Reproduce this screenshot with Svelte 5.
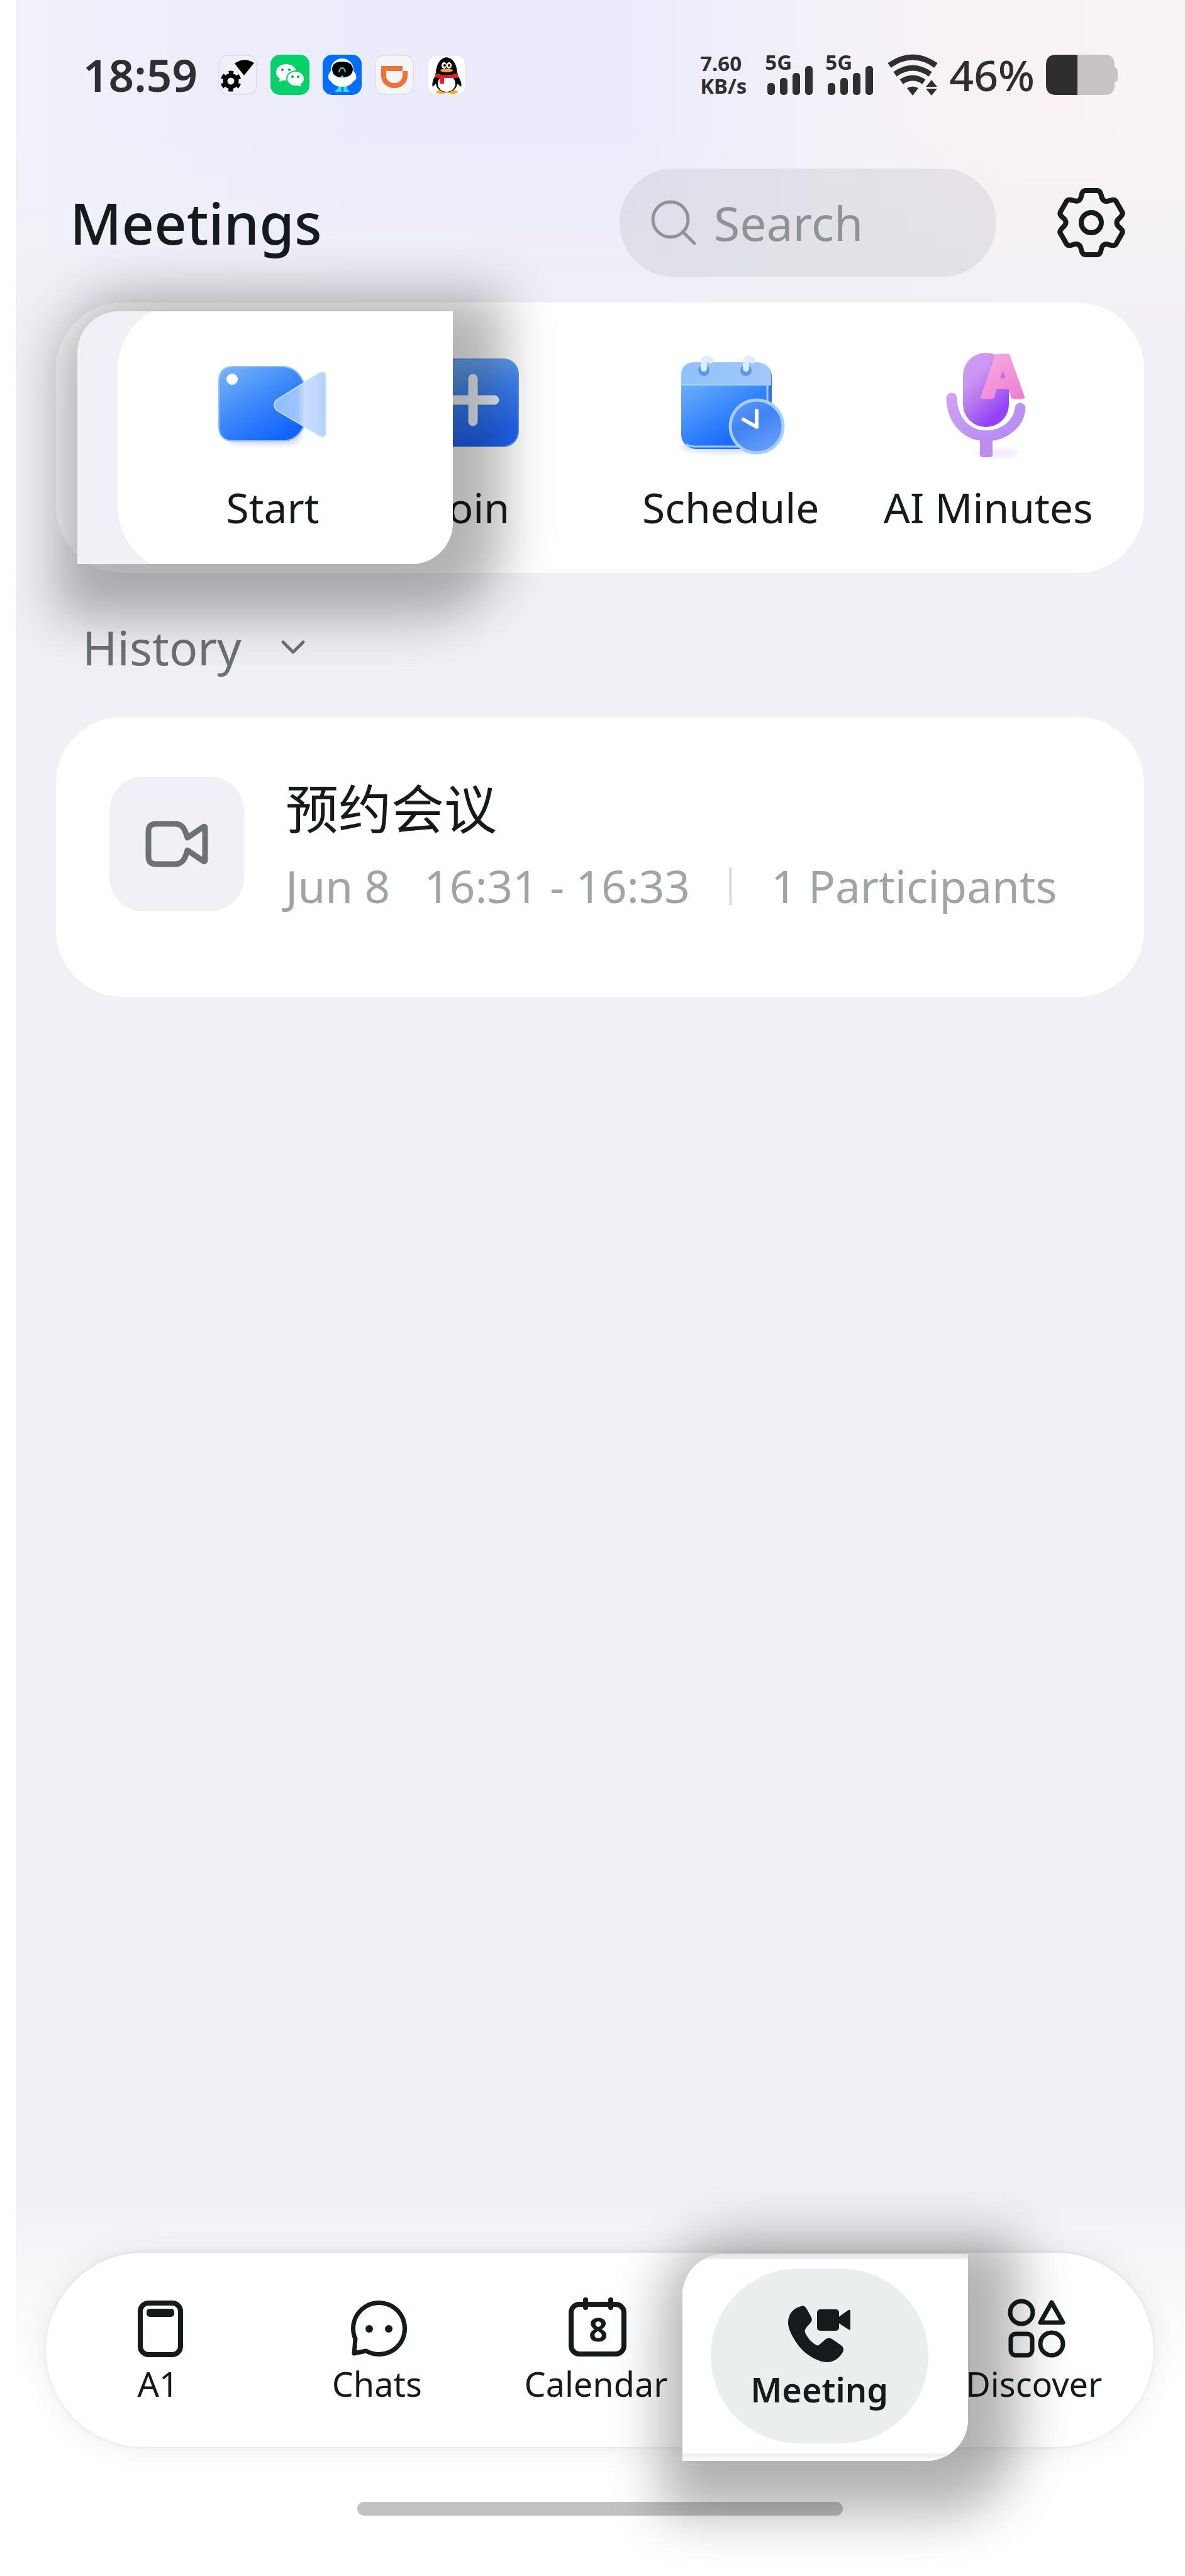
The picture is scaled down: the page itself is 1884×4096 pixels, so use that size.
<script>
    let query = $state("")
    let open = $state(true)

    // Outline of the settings cog: one tooth, turned six times
    function turn(x, y, deg) {
        const a = deg * Math.PI / 180
        const px = x * Math.cos(a) - y * Math.sin(a)
        const py = x * Math.sin(a) + y * Math.cos(a)
        return `${px.toFixed(1)} ${py.toFixed(1)}`
    }
    const cog = [0, 60, 120, 180, 240, 300].map((deg, i) =>
        `${i ? "L" : "M"}${turn(-10, -51, deg)}L${turn(10, -51, deg)}` +
        `Q${turn(14, -51, deg)} ${turn(16, -43, deg)}` +
        `Q${turn(18, -31, deg)} ${turn(29, -35, deg)}` +
        `Q${turn(37, -38, deg)} ${turn(39, -34, deg)}`
    ).join("") + "Z"

    const meetings = [
        { title: "预约会议", date: "Jun 8", time: "16:31 - 16:33", people: "1 Participants" }
    ]
</script>

{#snippet signal()}
    <div class="signal">
        <span>5G</span>
        <svg viewBox="0 0 74 46" aria-hidden="true">
            <rect x="1" y="27" width="12" height="19" rx="5" />
            <rect x="21" y="19" width="12" height="27" rx="5" />
            <rect x="41" y="11" width="12" height="35" rx="5" />
            <rect x="61" y="0" width="12" height="46" rx="5" />
        </svg>
    </div>
{/snippet}

<main class="phone">
    <div class="status">
        <div class="status-left">
            <time class="clock">18:59</time>
            <svg class="app" viewBox="0 0 62 64" aria-hidden="true">
                <rect x="1" y="1" width="60" height="62" rx="14" fill="#f0effb" stroke="#d5d4de" stroke-width="1" />
                <path d="M26 14Q41 3 57 13L41 33Z" />
                <circle cx="20" cy="42" r="9" fill="none" stroke="#000" stroke-width="7" />
                <circle cx="20" cy="42" r="13" fill="none" stroke="#000" stroke-width="7" stroke-dasharray="6.8 6.8" stroke-dashoffset="-3.4" />
            </svg>
            <svg class="app" viewBox="0 0 62 64" aria-hidden="true">
                <rect width="62" height="64" rx="15" fill="#08d169" />
                <g fill="#fff">
                    <ellipse cx="25" cy="28" rx="16" ry="13" />
                    <path d="M15 36L14 43L24 39Z" />
                    <ellipse cx="40" cy="38" rx="14" ry="12" stroke="#08d169" stroke-width="2" />
                    <path d="M42 48L49 51L47 44Z" />
                </g>
                <g fill="#08a552">
                    <circle cx="19" cy="24" r="2" /><circle cx="30" cy="24" r="2" />
                    <circle cx="35" cy="35" r="2" /><circle cx="44" cy="35" r="2" />
                </g>
            </svg>
            <svg class="app" viewBox="0 0 62 64" aria-hidden="true">
                <rect width="62" height="64" rx="15" fill="#006fff" />
                <path d="M24 50H30V59H20Q20 55 24 55ZM33 50H39V55Q42 56 42 59H33Z" fill="#35dde0" />
                <circle cx="31" cy="24" r="18" fill="#fff" />
                <path d="M13 26C7 32 8 40 13 42C19 54 43 54 49 42C55 40 55 32 49 26Z" fill="#fff" />
                <path d="M15 22Q16 11 31 11Q46 11 48 22Q48 36 31 36Q15 36 15 22Z" fill="#000" />
                <path d="M26 28Q27 21 31 21Q35 21 36 28" fill="none" stroke="#35dde0" stroke-width="2" />
                <circle cx="31" cy="35" r="2" fill="#35dde0" />
            </svg>
            <svg class="app" viewBox="0 0 62 64" aria-hidden="true">
                <rect x="1" y="1" width="60" height="62" rx="14" fill="#f6f5f5" stroke="#d5d4de" stroke-width="1" />
                <path d="M44 22H14V33C14 43 22 49 31 49C41 49 48 42 48 33V26" fill="none" stroke="#eb7335" stroke-width="8" />
            </svg>
            <svg class="app" viewBox="0 0 62 64" aria-hidden="true">
                <rect x="1" y="1" width="60" height="62" rx="14" fill="#fff" stroke="#e2e1ea" stroke-width="1" />
                <ellipse cx="23" cy="59" rx="9" ry="3" fill="#f5a623" />
                <ellipse cx="40" cy="59" rx="9" ry="3" fill="#f5a623" />
                <path d="M14 32C14 -5 48 -5 48 32C52 38 56 46 54 51L48 46C46 64 16 64 14 46L9 51C7 46 10 38 14 32Z" />
                <ellipse cx="31" cy="46" rx="14" ry="13" fill="#fff" />
                <ellipse cx="27" cy="17" rx="4" ry="5" fill="#fff" />
                <ellipse cx="35" cy="17" rx="4" ry="5" fill="#fff" />
                <circle cx="28" cy="17" r="2" /><circle cx="35" cy="17" r="2" />
                <ellipse cx="31" cy="25" rx="10" ry="3" fill="#f5a623" />
                <path d="M13 29Q31 36 49 29V37H27V46H20V37L13 36Z" fill="#e21f26" />
            </svg>
        </div>
        <div class="status-right">
            <div class="speed">
                <span class="rate">7.60</span>
                <span class="unit">KB/s</span>
            </div>
            {@render signal()}
            {@render signal()}
            <svg class="wifi" viewBox="0 0 80 65" aria-hidden="true">
                <g fill="none" stroke="#2f2f2f" stroke-width="9">
                    <path d="M3 17Q40 -9 77 17" />
                    <path d="M12 31Q40 11 68 31" />
                    <path d="M22 43Q40 31 58 43" />
                </g>
                <path d="M31 53Q40 48 49 53L40 65ZM61 51L70 40L79 51ZM61 54H79L70 65Z" fill="#2f2f2f" />
            </svg>
            <span class="percent">46%</span>
            <svg class="battery" viewBox="0 0 114 64" aria-hidden="true">
                <path d="M50 0H93Q109 0 109 16V20Q114 21 114 26V38Q114 43 109 44V48Q109 64 93 64H50Z" fill="#c7c3c4" />
                <path d="M16 0H50V64H16Q0 64 0 48V16Q0 0 16 0Z" fill="#2f2d2e" />
            </svg>
        </div>
    </div>

    <header class="top">
        <h1>Meetings</h1>
        <label class="search">
            <svg viewBox="0 0 72 72" aria-hidden="true">
                <circle cx="31" cy="31" r="28" />
                <path d="M52 52L69 69" />
            </svg>
            <input type="text" placeholder="Search" aria-label="Search" bind:value={query} />
        </label>
        <button class="settings" aria-label="Settings">
            <svg viewBox="-56 -56 112 112" aria-hidden="true">
                <path d={cog} />
                <circle r="16" />
            </svg>
        </button>
    </header>

    <section class="card actions">
        <div class="callout start-callout">
            <div class="callout-card">
                <button class="action">
                    <svg viewBox="0 0 170 170" aria-hidden="true">
                        <defs>
                            <linearGradient id="cam" x1="0" y1="0" x2="0.7" y2="1">
                                <stop offset="0" stop-color="#7ab6f8" />
                                <stop offset="0.5" stop-color="#3f8bfa" />
                                <stop offset="1" stop-color="#1263ff" />
                            </linearGradient>
                            <linearGradient id="lens" x1="0" y1="0" x2="1" y2="0">
                                <stop offset="0" stop-color="#8fbcff" />
                                <stop offset="0.45" stop-color="#9cc3fd" />
                                <stop offset="0.6" stop-color="#cbdffd" />
                                <stop offset="1" stop-color="#b4d2fd" />
                            </linearGradient>
                            <filter id="soft" x="-20%" y="-20%" width="140%" height="150%">
                                <feGaussianBlur stdDeviation="5" />
                            </filter>
                        </defs>
                        <rect x="10" y="110" width="120" height="38" rx="19" fill="#cdd6fc" filter="url(#soft)" />
                        <path d="M22 25H100Q122 25 133 48V122Q122 143 100 143H22Q-1 143 -1 120V48Q-1 25 22 25Z" fill="url(#cam)" stroke="#8fc2fb" stroke-width="2" />
                        <path d="M92 77L158 36Q169 31 169 42V129Q169 140 158 134L92 95Q82 86 92 77Z" fill="url(#lens)" stroke="#c4deff" stroke-width="2" />
                        <circle cx="20" cy="45" r="9" fill="#fff" />
                    </svg>
                    <span>Start</span>
                </button>
            </div>
        </div>
        <div class="action"></div>
        <button class="action">
            <svg viewBox="0 0 170 170" aria-hidden="true">
                <defs>
                    <linearGradient id="join" x1="0" y1="0" x2="0.3" y2="1">
                        <stop offset="0" stop-color="#7fb5f8" />
                        <stop offset="0.5" stop-color="#3f86f5" />
                        <stop offset="1" stop-color="#1f66f5" />
                    </linearGradient>
                </defs>
                <rect x="14" y="13" width="143" height="139" rx="24" fill="url(#join)" stroke="#5b9af5" stroke-width="2" />
                <path d="M85 44V112M51 78H119" fill="none" stroke="#f4f8ff" stroke-width="15" stroke-linecap="round" />
            </svg>
            <span>Join</span>
        </button>
        <button class="action">
            <svg viewBox="0 0 170 170" aria-hidden="true">
                <defs>
                    <linearGradient id="day" x1="0" y1="0" x2="0.6" y2="1">
                        <stop offset="0" stop-color="#86c0fc" />
                        <stop offset="0.5" stop-color="#4693fc" />
                        <stop offset="0.9" stop-color="#1a6cff" />
                    </linearGradient>
                    <linearGradient id="dayTop" x1="0" y1="0" x2="1" y2="0">
                        <stop offset="0" stop-color="#8ec3fb" />
                        <stop offset="1" stop-color="#a3c6fb" />
                    </linearGradient>
                    <linearGradient id="dial" x1="0.2" y1="0" x2="0.8" y2="1">
                        <stop offset="0" stop-color="#5a97f6" />
                        <stop offset="0.4" stop-color="#3f83f3" />
                        <stop offset="1" stop-color="#6fa0f9" />
                    </linearGradient>
                </defs>
                <ellipse cx="80" cy="152" rx="74" ry="9" fill="#c9d6fb" filter="url(#soft)" />
                <rect x="8" y="19" width="142" height="137" rx="22" fill="#2f74ee" />
                <rect x="6" y="18" width="140" height="137" rx="22" fill="url(#day)" />
                <path d="M6 54V40Q6 18 28 18H128Q148 20 149 40V54Z" fill="url(#dayTop)" />
                <path d="M6 54H148" stroke="#a9d2fe" stroke-width="2" />
                <path d="M143 118V40Q141 20 124 19M14 148Q18 152 28 152H100" fill="none" stroke="#9bcbfd" stroke-width="3" />
                <g fill="#5c95ea"><circle cx="42" cy="31" r="9" /><circle cx="109" cy="31" r="9" /></g>
                <path d="M42 28V16Q44 10 52 15M109 28V16Q111 10 119 15" fill="none" stroke="#dfebff" stroke-width="10" stroke-linecap="round" />
                <circle cx="126" cy="120" r="42" fill="url(#dial)" stroke="#a3cfff" stroke-width="5" />
                <path d="M126 95V121L105 109" fill="none" stroke="#fff" stroke-width="6" stroke-linecap="round" stroke-linejoin="round" />
            </svg>
            <span>Schedule</span>
        </button>
        <button class="action">
            <svg viewBox="0 0 170 170" aria-hidden="true">
                <defs>
                    <linearGradient id="mic" x1="0.1" y1="0" x2="0.7" y2="1">
                        <stop offset="0" stop-color="#cf9df0" />
                        <stop offset="0.3" stop-color="#cb96f1" />
                        <stop offset="0.6" stop-color="#b070ee" />
                        <stop offset="0.9" stop-color="#9343fa" />
                    </linearGradient>
                    <linearGradient id="stand" x1="0" y1="0" x2="1" y2="1">
                        <stop offset="0" stop-color="#cfa0f3" />
                        <stop offset="1" stop-color="#b28cf6" />
                    </linearGradient>
                    <linearGradient id="ai" x1="0" y1="0" x2="0.4" y2="1">
                        <stop offset="0" stop-color="#fab9e0" />
                        <stop offset="1" stop-color="#ee80d2" />
                    </linearGradient>
                </defs>
                <ellipse cx="100" cy="162" rx="34" ry="7" fill="#efe8fc" filter="url(#soft)" />
                <path d="M27 75C28 112 52 135 82 135C110 135 134 116 136 91" fill="none" stroke="url(#stand)" stroke-width="17" stroke-linecap="round" />
                <rect x="72" y="136" width="20" height="33" rx="4" fill="#bd8df0" />
                <rect x="45" y="3" width="73" height="118" rx="36" fill="url(#mic)" />
                <text x="108" y="73" text-anchor="middle" fill="url(#ai)" stroke="url(#ai)" stroke-width="6" stroke-linejoin="round">A</text>
            </svg>
            <span>AI Minutes</span>
        </button>
    </section>

    <button class="history" aria-expanded={open} onclick={() => open = !open}>
        <span>History</span>
        <svg viewBox="0 0 40 24" aria-hidden="true"><path d="M4 4L20 20L36 4" /></svg>
    </button>

    {#if open}
        {#each meetings as meeting}
            <article class="card meeting">
                <div class="meeting-icon">
                    <svg viewBox="0 0 98 72" aria-hidden="true">
                        <path d="M16 4H46C58 4 62 12 66 26L91 9Q94 7 94 11V61Q94 65 91 63L66 46C62 60 58 68 46 68H16C8 68 4 64 4 56V16C4 8 8 4 16 4Z" />
                    </svg>
                </div>
                <div class="meeting-text">
                    <h2>{meeting.title}</h2>
                    <p>
                        <span>{meeting.date}</span>
                        <span>{meeting.time}</span>
                        <i class="divider"></i>
                        <span>{meeting.people}</span>
                    </p>
                </div>
            </article>
        {/each}
    {/if}

    <footer class="bottom">
        <nav>
            <a href="#a1">
                <svg viewBox="0 0 96 96" aria-hidden="true">
                    <rect class="line" x="20" y="10" width="64" height="82" rx="13" />
                    <rect x="30" y="19" width="44" height="13" rx="5" />
                </svg>
                <span>A1</span>
            </a>
            <a href="#chats">
                <svg viewBox="0 0 96 96" aria-hidden="true">
                    <path class="line thin" d="M14 67A41 41 0 1 1 31 86L12 90Z" />
                    <circle cx="36" cy="51" r="6" />
                    <circle cx="67" cy="51" r="6" />
                </svg>
                <span>Chats</span>
            </a>
            <a href="#calendar">
                <svg viewBox="0 0 96 96" aria-hidden="true">
                    <rect class="line" x="8" y="12" width="84" height="79" rx="13" />
                    <path class="line" d="M31 5V17M71 5V17" />
                    <text class="day" x="51" y="71" text-anchor="middle">8</text>
                </svg>
                <span>Calendar</span>
            </a>
            <div class="current">
                <div class="callout meeting-callout">
                    <a class="pill" href="#meeting" aria-current="page">
                        <svg viewBox="0 0 96 96" aria-hidden="true">
                            <path d="M19 6C22 4 25 6 28 11L34 22C37 28 36 30 33 33L27 40C25 43 24 45 25 48C29 57 36 64 43 68C46 69 47 68 49 66L57 59C61 56 65 56 69 59L82 68C86 71 87 75 85 79C80 88 71 95 60 95C46 95 26 84 14 68C4 54 -3 40 -2 30C-1 18 6 9 19 6Z" />
                            <rect x="44" y="11" width="35" height="34" rx="5" />
                            <path d="M77 24L94 12Q97 11 97 14V42Q97 45 94 43L77 32Z" />
                        </svg>
                        <span>Meeting</span>
                    </a>
                </div>
            </div>
            <a href="#discover">
                <svg viewBox="0 0 96 96" aria-hidden="true">
                    <circle class="line thin" cx="28" cy="25" r="18" />
                    <path class="line thin" d="M76 9L94 41H58Z" />
                    <rect class="line thin" x="11" y="59" width="34" height="34" rx="8" />
                    <circle class="line thin" cx="76" cy="75" r="18" />
                </svg>
                <span>Discover</span>
            </a>
        </nav>
        <div class="home-bar"></div>
    </footer>
</main>

<style>
    :global(body) {
        margin: 0;
        background: #fff;
    }

    .phone {
        --ink: #151b1c;
        --page: #f1f0f6;
        box-sizing: border-box;
        display: flex;
        flex-direction: column;
        min-height: 100vh;
        margin-left: 25px;
        padding-top: 87px;
        overflow: hidden;
        color: var(--ink);
        font-family: "Noto Sans", "Noto Sans CJK SC", sans-serif;
        background:
            linear-gradient(180deg, rgba(241, 240, 246, 0) 200px, #f1f0f6 540px),
            linear-gradient(90deg, #f0f1fa 0, #ebebfb 30%, #ebebfc 52%, #f3f1f8 70%, #f9f2f4 85%, #f8f3f4 100%);
    }
    button,
    input {
        margin: 0;
        border: none;
        padding: 0;
        outline: none;
        background: transparent;
        color: inherit;
        font: inherit;
    }
    button {
        cursor: pointer;
    }
    a {
        color: inherit;
        text-decoration: none;
    }
    svg {
        display: block;
        flex: none;
        overflow: visible;
    }

    .status {
        display: flex;
        justify-content: space-between;
        align-items: center;
        height: 64px;
        padding: 0 107px 0 107px;
        color: #2f2f2f;
    }
    .status-left,
    .status-right {
        display: flex;
        align-items: center;
    }
    .status-left {
        gap: 21px;
    }
    .clock {
        margin-right: 12px;
        font-size: 71px;
        font-weight: 600;
        line-height: 64px;
    }
    .app {
        width: 62px;
        height: 64px;
    }
    .speed {
        display: flex;
        flex-direction: column;
        margin-right: 32px;
        font-size: 33px;
        font-weight: 700;
        line-height: 36px;
    }
    .signal {
        position: relative;
        display: flex;
        align-items: flex-end;
        width: 74px;
        height: 64px;
        margin-right: 22px;
    }
    .signal svg {
        width: 74px;
        height: 46px;
        fill: #2f2f2f;
    }
    .signal span {
        position: absolute;
        top: -4px;
        left: -3px;
        font-size: 33px;
        font-weight: 700;
        line-height: 32px;
    }
    .wifi {
        width: 80px;
        height: 65px;
    }
    .percent {
        margin: 0 18px;
        font-size: 68px;
        font-weight: 500;
        line-height: 64px;
    }
    .battery {
        width: 114px;
        height: 64px;
    }

    .top {
        display: flex;
        align-items: center;
        margin-top: 117px;
        padding: 0 93px 0 86px;
    }
    h1 {
        flex: 1;
        margin: 0;
        font-size: 90px;
        font-weight: 500;
        line-height: 112px;
    }
    .search {
        box-sizing: border-box;
        display: flex;
        align-items: center;
        gap: 28px;
        width: 599px;
        height: 172px;
        border-radius: 86px;
        padding: 0 50px;
        background: rgba(20, 20, 30, .065);
        color: #8f9296;
    }
    .search svg {
        width: 72px;
        height: 72px;
        fill: none;
        stroke: currentColor;
        stroke-width: 5;
        stroke-linecap: round;
    }
    .search input {
        flex: 1;
        min-width: 0;
        font-size: 75px;
        line-height: 96px;
    }
    .search input::placeholder {
        color: #8f9296;
        opacity: 1;
    }
    .settings {
        margin-left: 95px;
    }
    .settings svg {
        width: 112px;
        height: 112px;
        fill: none;
        stroke: var(--ink);
        stroke-width: 8;
        stroke-linejoin: round;
    }

    .card {
        margin: 0 65px 0 64px;
        border-radius: 106px;
        background: #fff;
    }
    .actions {
        position: relative;
        display: flex;
        margin-top: 41px;
        padding: 77px 43px 65px 49px;
    }
    .action {
        display: flex;
        flex: 1 1 0;
        flex-direction: column;
        align-items: center;
        gap: 38px;
        min-width: 0;
        font-size: 66px;
        line-height: 80px;
        white-space: nowrap;
    }
    .action svg {
        width: 170px;
        height: 170px;
    }
    .action text {
        font-size: 92px;
        font-weight: 700;
    }

    /* Lifted tile with two round corners and a wide shadow */
    .callout {
        position: absolute;
        z-index: 2;
        box-sizing: border-box;
        border-radius: 66px 0;
        box-shadow: 24px 29px 84px 56px rgba(0, 0, 0, .3);
    }
    .start-callout {
        top: 14px;
        bottom: 14px;
        left: 34px;
        width: 597px;
        overflow: hidden;
        background: var(--page);
    }
    .callout-card {
        display: flex;
        margin: -14px 0 -14px 64px;
        border-radius: 106px 0 0 106px;
        padding: 77px 40px 65px 0;
        background: #fff;
    }

    .history {
        display: flex;
        align-items: center;
        align-self: flex-start;
        gap: 62px;
        margin: 78px 0 71px 106px;
        color: #6d7075;
        font-size: 75px;
        line-height: 80px;
    }
    .history svg {
        width: 40px;
        height: 24px;
        fill: none;
        stroke: currentColor;
        stroke-width: 5;
        stroke-linecap: round;
        stroke-linejoin: round;
    }

    .meeting {
        display: flex;
        align-items: flex-start;
        gap: 66px;
        padding: 95px 85px 136px;
    }
    .meeting-icon {
        display: flex;
        flex: none;
        justify-content: center;
        align-items: center;
        width: 214px;
        height: 214px;
        border-radius: 54px;
        background: var(--page);
    }
    .meeting-icon svg {
        width: 98px;
        height: 72px;
        fill: none;
        stroke: #6d7075;
        stroke-width: 9;
        stroke-linejoin: round;
    }
    .meeting h2 {
        margin: 0 0 40px;
        font-family: "Noto Sans CJK SC", sans-serif;
        font-size: 84px;
        font-weight: 400;
        line-height: 94px;
    }
    .meeting p {
        display: flex;
        align-items: center;
        margin: 0;
        color: #a0a4a4;
        font-size: 71px;
        line-height: 80px;
        white-space: nowrap;
    }
    .meeting p span + span {
        margin-left: 54px;
    }
    .divider {
        width: 5px;
        height: 60px;
        margin: 0 62px;
        background: #dfe2e2;
    }

    .bottom {
        margin-top: auto;
        padding: 82px 50px 96px 48px;
        background: linear-gradient(180deg, var(--page) 0, #f9f9fb 140px, #fff 290px);
    }
    nav {
        display: flex;
        border-radius: 156px;
        padding: 70px 16px 69px 4px;
        background: #fff;
        box-shadow: 0 0 50px rgba(40, 50, 60, .09), 0 0 6px rgba(40, 50, 60, .1);
        font-size: 54px;
        line-height: 64px;
    }
    nav a,
    .current {
        display: flex;
        flex: 1 1 0;
        flex-direction: column;
        align-items: center;
        gap: 10px;
        min-width: 0;
    }
    nav svg {
        width: 96px;
        height: 96px;
        fill: var(--ink);
    }
    nav .line {
        fill: none;
        stroke: var(--ink);
        stroke-width: 8;
        stroke-linecap: round;
        stroke-linejoin: round;
    }
    nav .thin {
        stroke-width: 7;
    }
    .day {
        font-size: 52px;
        font-weight: 700;
    }
    .current {
        position: relative;
    }
    .meeting-callout {
        top: -68px;
        left: -37px;
        width: 454px;
        padding: 23px 63px 28px 45px;
        background: linear-gradient(180deg, #e5e5ea 0, #e9e9ed 6px, #fff 10px, #fff 316px, #ededee 319px, #f8f8f8 324px, #fafafa 100%);
    }
    .meeting-callout .pill {
        border-radius: 139px;
        padding: 54px 0;
        background: #eaeeef;
        font-weight: 600;
    }
    .home-bar {
        width: 772px;
        height: 22px;
        margin: 87px auto 0;
        border-radius: 11px;
        background: #c2c2c2;
    }
</style>
